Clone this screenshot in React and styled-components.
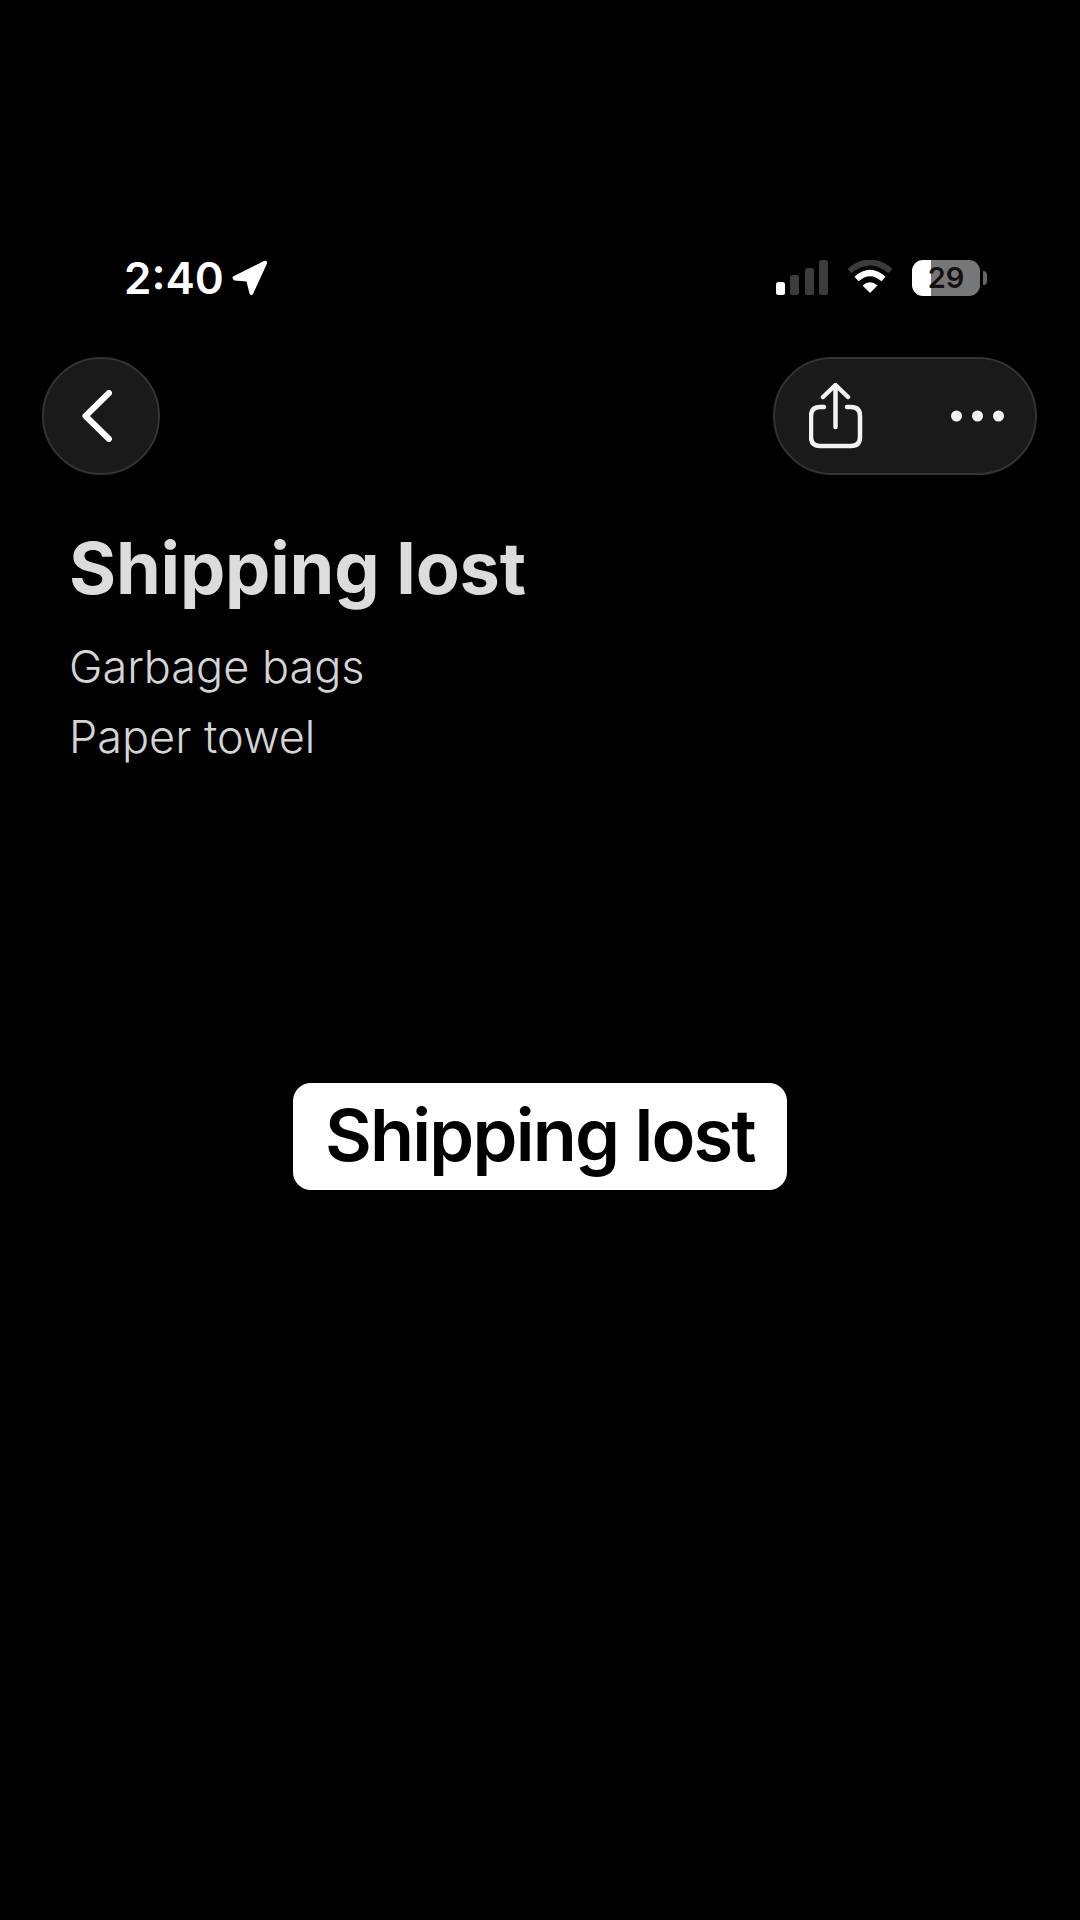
import React from 'react'
import styled, { createGlobalStyle } from 'styled-components'

const GlobalStyle = createGlobalStyle`
  html, body {
    margin: 0;
    padding: 0;
    background: #000;
  }
`

const Page = styled.div`
  width: 1080px;
  height: 1920px;
  overflow: hidden;
  background: #000;
  font-family: Inter, 'Liberation Sans', sans-serif;
  display: flex;
  flex-direction: column;
`

const StatusBar = styled.div`
  margin-top: 254px;
  height: 48px;
  padding: 0 100px 0 124px;
  display: flex;
  align-items: center;
  justify-content: space-between;
`

const Time = styled.div`
  display: flex;
  align-items: center;
  gap: 8px;
  color: #fff;
  font-size: 44px;
  font-weight: 600;
`

const StatusIcons = styled.div`
  display: flex;
  align-items: center;
  gap: 19px;
`

const Battery = styled.div`
  position: relative;
  width: 68px;
  height: 36px;
  border-radius: 11px;
  background: linear-gradient(90deg, #fff 0 28%, #777 28% 100%);
  color: #111;
  font-size: 29px;
  font-weight: 600;
  line-height: 36px;
  text-align: center;
  &::after {
    content: '';
    position: absolute;
    right: -7px;
    top: 11px;
    width: 4px;
    height: 14px;
    border-radius: 0 4px 4px 0;
    background: #666;
  }
`

const NavBar = styled.div`
  margin-top: 55px;
  padding: 0 43px 0 42px;
  display: flex;
  justify-content: space-between;
`

const CircleButton = styled.button`
  width: 118px;
  height: 118px;
  padding: 0 8px 0 0;
  border-radius: 50%;
  border: 2px solid #333;
  background: #1a1a1a;
  display: flex;
  align-items: center;
  justify-content: center;
`

const Pill = styled.div`
  width: 264px;
  height: 118px;
  box-sizing: border-box;
  padding: 0 30px 0 34px;
  border-radius: 59px;
  border: 2px solid #333;
  background: #1a1a1a;
  display: flex;
  align-items: center;
  justify-content: space-between;
`

const Note = styled.div`
  margin-top: 52px;
  padding-left: 69px;
`

const Title = styled.h1`
  margin: 0;
  color: #dcdcdc;
  font-size: 72px;
  line-height: 82px;
  font-weight: 700;
  letter-spacing: -0.2px;
`

const Line = styled.div`
  color: #d4d4d4;
  font-size: 45px;
  line-height: 70px;
  font-weight: 300;
  &:first-of-type {
    margin-top: 23px;
  }
`

const CaptionRow = styled.div`
  margin-top: 311px;
  display: flex;
  justify-content: center;
`

const Caption = styled.div`
  width: 494px;
  height: 107px;
  border-radius: 18px;
  background: #fff;
  color: #000;
  font-size: 72px;
  font-weight: 600;
  line-height: 104px;
  letter-spacing: -1.8px;
  text-align: center;
`

const LocationIcon = () => (
  <svg width="36" height="36" viewBox="0 0 36 36">
    <path d="M1 16.5 L32 1 Q35.5 0 35 3.5 L21 34 Q19 36.5 17.5 33.5 L14.5 21.5 L2.5 20.5 Q-0.5 19 1 16.5 Z" fill="#fff" />
  </svg>
)

const SignalIcon = () => (
  <svg width="52" height="36" viewBox="0 0 52 36">
    <rect x="0" y="22" width="9" height="13" rx="2.5" fill="#fff" />
    <rect x="14" y="15" width="9" height="20" rx="2.5" fill="#3c3c3c" />
    <rect x="29" y="8" width="9" height="27" rx="2.5" fill="#3c3c3c" />
    <rect x="43" y="0" width="9" height="35" rx="2.5" fill="#3c3c3c" />
  </svg>
)

const WifiIcon = () => (
  <svg width="46" height="36" viewBox="0 0 46 36" fill="none" strokeWidth="6">
    <path d="M2.5 11 Q23 -6 43.5 11" stroke="#3c3c3c" />
    <path d="M9.5 19 Q23 7 36.5 19" stroke="#fff" />
    <path d="M23 33 L15.5 25.5 Q23 19 30.5 25.5 Z" fill="#fff" strokeWidth="0" />
  </svg>
)

const BackIcon = () => (
  <svg width="30" height="52" viewBox="0 0 30 52" fill="none" stroke="#fff" strokeWidth="6" strokeLinecap="round" strokeLinejoin="round">
    <path d="M27 3 L3.5 26 L27 49" />
  </svg>
)

const ShareIcon = () => (
  <svg width="54" height="66" viewBox="0 0 54 66" fill="none" stroke="#f2f2f2" strokeWidth="4.5" strokeLinecap="round" strokeLinejoin="round">
    <path d="M15 24 H11 Q2 24 2 33 V54 Q2 63 11 63 H42 Q51 63 51 54 V33 Q51 24 42 24 H38" />
    <path d="M26.5 44 V3" />
    <path d="M14 14 L26.5 2 L39 14" />
  </svg>
)

const MoreIcon = () => (
  <svg width="54" height="12" viewBox="0 0 54 12" fill="#f2f2f2">
    <circle cx="5.5" cy="6" r="5.5" />
    <circle cx="26.5" cy="6" r="5.5" />
    <circle cx="47.5" cy="6" r="5.5" />
  </svg>
)

export default function App() {
  return (
    <Page>
      <GlobalStyle />
      <StatusBar>
        <Time>
          2:40
          <LocationIcon />
        </Time>
        <StatusIcons>
          <SignalIcon />
          <WifiIcon />
          <Battery>29</Battery>
        </StatusIcons>
      </StatusBar>
      <NavBar>
        <CircleButton>
          <BackIcon />
        </CircleButton>
        <Pill>
          <ShareIcon />
          <MoreIcon />
        </Pill>
      </NavBar>
      <Note>
        <Title>Shipping lost</Title>
        <Line>Garbage bags</Line>
        <Line>Paper towel</Line>
      </Note>
      <CaptionRow>
        <Caption>Shipping lost</Caption>
      </CaptionRow>
    </Page>
  )
}
